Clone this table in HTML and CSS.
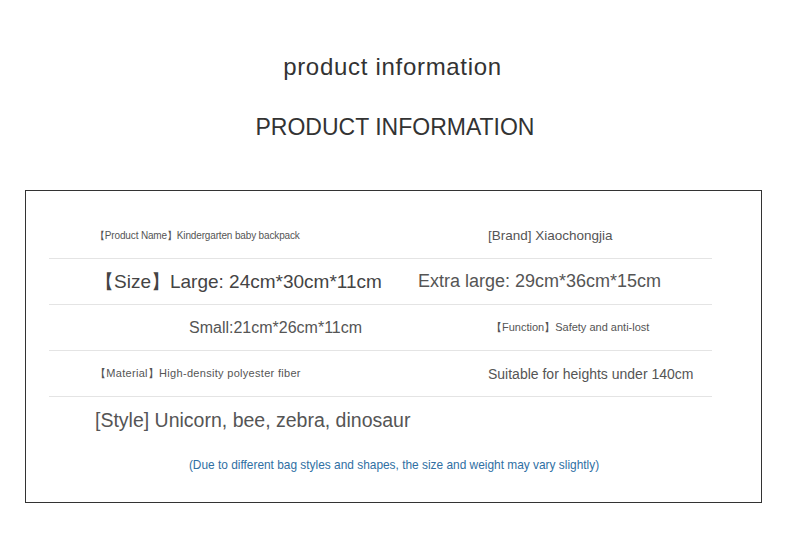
FILE: index.html
```html
<!DOCTYPE html>
<html>
<head>
<meta charset="utf-8">
<link rel="stylesheet" href="styles.css">
</head>
<body>
<div class="page">
  <h1 class="title-lower">product information</h1>
  <h2 class="title-upper">PRODUCT INFORMATION</h2>
  <div class="box">
    <div class="row">
      <div class="cell left pad-a xs">【Product Name】Kindergarten baby backpack</div>
      <div class="cell right pad-r1 sm">[Brand] Xiaochongjia</div>
    </div>
    <div class="row">
      <div class="cell left pad-a lg dark">【Size】Large: 24cm*30cm*11cm</div>
      <div class="cell right pad-r0 lg2">Extra large: 29cm*36cm*15cm</div>
    </div>
    <div class="row">
      <div class="cell left pad-b md">Small:21cm*26cm*11cm</div>
      <div class="cell right pad-r2 xs2">【Function】Safety and anti-lost</div>
    </div>
    <div class="row">
      <div class="cell left pad-a xs3">【Material】High-density polyester fiber</div>
      <div class="cell right pad-r1 sm2">Suitable for heights under 140cm</div>
    </div>
    <div class="row last">
      <div class="cell left pad-a xl">[Style] Unicorn, bee, zebra, dinosaur</div>
    </div>
    <p class="note">(Due to different bag styles and shapes, the size and weight may vary slightly)</p>
  </div>
</div>
</body>
</html>
```

FILE: styles.css
```css
html, body {
  margin: 0;
  padding: 0;
  background: #fff;
}
body {
  font-family: "Liberation Sans", Arial, sans-serif;
  color: #333;
}
.page {
  width: 790px;
  height: 546px;
  padding-top: 50px;
  box-sizing: border-box;
}
.title-lower {
  margin: 0;
  text-align: center;
  font-weight: 400;
  font-size: 24px;
  letter-spacing: 0.7px;
  line-height: 34px;
  color: #333;
  padding-right: 5px;
}
.title-upper {
  margin: 26px 0 0;
  text-align: center;
  font-weight: 400;
  font-size: 23px;
  line-height: 34px;
  color: #333;
}
.box {
  margin: 46px 0 0 25px;
  width: 737px;
  height: 313px;
  box-sizing: border-box;
  border: 1px solid #333;
  padding: 22px 0 0 23px;
}
.row {
  width: 663px;
  height: 46px;
  box-sizing: border-box;
  border-bottom: 1px solid #e4e4e4;
  display: flex;
  align-items: center;
}
.row.last {
  border-bottom: none;
}
.cell {
  white-space: nowrap;
  color: #555;
}
.left {
  width: 369px;
  flex: none;
  box-sizing: border-box;
}
.right {
  flex: 1;
}
.pad-a { padding-left: 46px; }
.pad-b { padding-left: 140px; }
.pad-r0 { padding-left: 0; }
.pad-r1 { padding-left: 70px; }
.pad-r2 { padding-left: 73px; }
.xs { font-size: 10px; letter-spacing: -0.15px; }
.xs2 { font-size: 11px; }
.xs3 { font-size: 11px; letter-spacing: 0.3px; }
.sm { font-size: 13.5px; }
.sm2 { font-size: 14px; }
.md { font-size: 16px; }
.lg { font-size: 19px; }
.lg2 { font-size: 18px; }
.xl { font-size: 19.5px; }
.dark { color: #444; }
.note {
  margin: 15px 0 0;
  width: 690px;
  text-align: center;
  font-size: 11.9px;
  color: #2f6fa3;
}
```
